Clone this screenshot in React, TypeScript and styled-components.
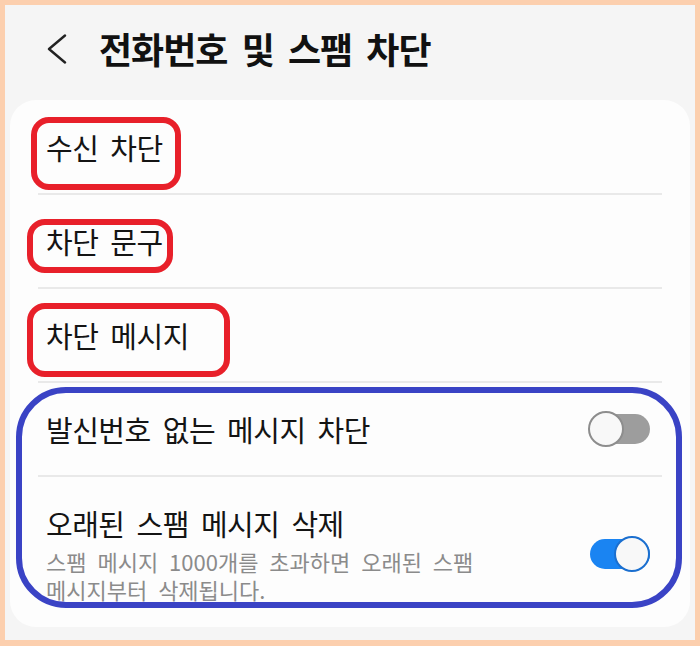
import React from "react";
import styled, { createGlobalStyle } from "styled-components";

const GlobalStyle = createGlobalStyle`
  html, body { margin: 0; padding: 0; background: #fccfae; }
  body { font-family: "Noto Sans CJK KR", "Noto Sans", sans-serif; }
  * { box-sizing: border-box; }
`;

const Frame = styled.div`
  width: 700px;
  height: 646px;
  padding: 5px 5px 6px 5px;
  background: #fccfae;
`;

const Screen = styled.div`
  height: 100%;
  background: #f5f5f5;
  display: flex;
  flex-direction: column;
`;

const Header = styled.header`
  height: 95px;
  padding: 23px 0 0 42px;
  display: flex;
  align-items: flex-start;
`;

const HeaderLine = styled.div`
  height: 40px;
  display: flex;
  align-items: center;
  gap: 32px;
`;

const BackIcon = styled.svg`
  display: block;
  width: 20px;
  height: 30px;
  margin-top: 1px;
`;

const Title = styled.h1`
  margin: 0;
  font-size: 36px;
  line-height: 40px;
  font-weight: 700;
  letter-spacing: -1px;
  word-spacing: 7px;
  color: #111;
`;

const Card = styled.section`
  position: relative;
  margin: 0 5px;
  padding-top: 1px;
  background: #fdfdfd;
  border-radius: 26px;
`;

const List = styled.div`
  margin: 0 28px;
  display: flex;
  flex-direction: column;
`;

const Row = styled.div<{ $last?: boolean }>`
  position: relative;
  display: flex;
  align-items: center;
  justify-content: space-between;
  gap: 16px;
  min-height: ${(p) => (p.$last ? "auto" : "94px")};
  padding: ${(p) => (p.$last ? "28px 12px 24px 8px" : "0 12px 0 8px")};
  border-bottom: ${(p) => (p.$last ? "none" : "2px solid #e9e9e9")};
`;

const TextBlock = styled.div`
  display: flex;
  flex-direction: column;
`;

const Label = styled.span`
  font-size: 29px;
  line-height: 36px;
  font-weight: 400;
  letter-spacing: -0.5px;
  word-spacing: 6px;
  color: #141414;
`;

const Sub = styled.span`
  margin-top: 6px;
  font-size: 22px;
  line-height: 28px;
  word-spacing: 6px;
  color: #8b8b8b;
`;

const Mark = styled.span<{ $color: string; $radius: number }>`
  position: absolute;
  border: 6px solid ${(p) => p.$color};
  border-radius: ${(p) => p.$radius}px;
  pointer-events: none;
`;

const SwitchTrack = styled.span<{ $on: boolean }>`
  position: relative;
  display: block;
  flex-shrink: 0;
  width: 62px;
  height: 36px;
  &::before {
    content: "";
    position: absolute;
    left: 2px;
    right: 0;
    top: 3px;
    bottom: 3px;
    border-radius: 15px;
    background: ${(p) => (p.$on ? "#1a84f2" : "#9d9d9d")};
  }
`;

const Thumb = styled.span<{ $on: boolean }>`
  position: absolute;
  top: 0;
  ${(p) => (p.$on ? "right: 0;" : "left: 0;")}
  width: 36px;
  height: 36px;
  border-radius: 50%;
  border: 2px solid ${(p) => (p.$on ? "#1b6fcf" : "#8d8d8d")};
  background: #f8f8f8;
`;

function Switch({ on }: { on: boolean }) {
  return (
    <SwitchTrack $on={on}>
      <Thumb $on={on} />
    </SwitchTrack>
  );
}

type Box = { left: number; top: number; width: number; height: number };

function RedMark({ box }: { box: Box }) {
  return <Mark $color="#e8202a" $radius={18} style={box} />;
}

export default function App() {
  return (
    <>
      <GlobalStyle />
      <Frame>
        <Screen>
          <Header>
            <HeaderLine>
              <BackIcon viewBox="0 0 20 30" aria-hidden>
                <polyline
                  points="18,1.5 2,15 18,28.5"
                  fill="none"
                  stroke="#222"
                  strokeWidth="2.4"
                  strokeLinecap="round"
                  strokeLinejoin="round"
                />
              </BackIcon>
              <Title>전화번호 및 스팸 차단</Title>
            </HeaderLine>
          </Header>
          <Card>
            <List>
              <Row>
                <Label>수신 차단</Label>
                <RedMark box={{ left: -7, top: 16, width: 150, height: 73 }} />
              </Row>
              <Row>
                <Label>차단 문구</Label>
                <RedMark box={{ left: -11, top: 24, width: 146, height: 54 }} />
              </Row>
              <Row>
                <Label>차단 메시지</Label>
                <RedMark box={{ left: -11, top: 14, width: 203, height: 74 }} />
              </Row>
              <Row>
                <Label>발신번호 없는 메시지 차단</Label>
                <Switch on={false} />
              </Row>
              <Row $last>
                <TextBlock>
                  <Label>오래된 스팸 메시지 삭제</Label>
                  <Sub>
                    스팸 메시지 1000개를 초과하면 오래된 스팸
                    <br />
                    메시지부터 삭제됩니다.
                  </Sub>
                </TextBlock>
                <Switch on />
              </Row>
            </List>
            <Mark
              $color="#3a43c5"
              $radius={50}
              style={{ left: 6, top: 287, width: 666, height: 221 }}
            />
          </Card>
        </Screen>
      </Frame>
    </>
  );
}
